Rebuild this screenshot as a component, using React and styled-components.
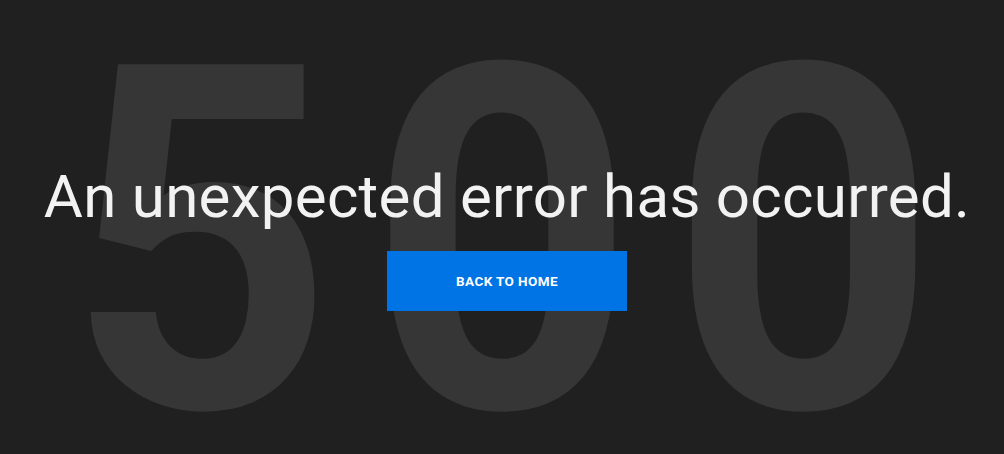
import React from 'react'
import styled, { createGlobalStyle } from 'styled-components'

const GlobalStyle = createGlobalStyle`
  * { box-sizing: border-box; }
  html, body {
    margin: 0;
    padding: 0;
    background: #202020;
  }
  body {
    font-family: Roboto, "Liberation Sans", sans-serif;
  }
`

const Page = styled.main`
  position: relative;
  min-height: 100vh;
  overflow: hidden;
  background: #202020;
  display: flex;
  flex-direction: column;
  align-items: center;
  padding: 161px 0 0 10px;
`

const Code = styled.div`
  position: absolute;
  top: 2px;
  left: 0;
  right: 0;
  text-align: center;
  font-size: 482px;
  font-weight: 700;
  line-height: 1;
  letter-spacing: 36px;
  padding-left: 36px;
  color: #363636;
  transform: scaleX(0.965);
  user-select: none;
  pointer-events: none;
`

const Content = styled.div`
  position: relative;
  z-index: 1;
  display: flex;
  flex-direction: column;
  align-items: center;
  gap: 18px;
`

const Title = styled.h1`
  margin: 0;
  font-size: 60px;
  font-weight: 400;
  line-height: 72px;
  letter-spacing: 0.3px;
  color: #f2f2f2;
  white-space: nowrap;
`

const HomeButton = styled.a`
  display: flex;
  align-items: center;
  justify-content: center;
  width: 240px;
  height: 60px;
  background: #0074e4;
  color: #ffffff;
  font-size: 13.5px;
  font-weight: 700;
  letter-spacing: 0.4px;
  text-transform: uppercase;
  text-decoration: none;
  cursor: pointer;
`

export default function App() {
  return (
    <>
      <GlobalStyle />
      <Page>
        <Code aria-hidden="true">500</Code>
        <Content>
          <Title>An unexpected error has occurred.</Title>
          <HomeButton href="#">Back to home</HomeButton>
        </Content>
      </Page>
    </>
  )
}
